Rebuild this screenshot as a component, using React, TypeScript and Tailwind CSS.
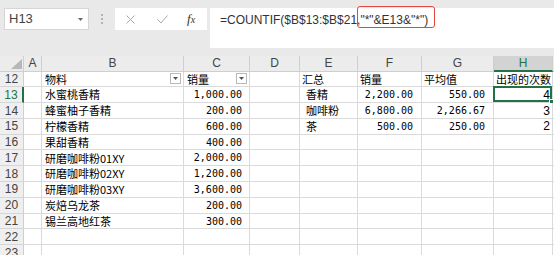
import React from 'react';

type Row = {
  n: number;
  b?: string;
  c?: string;
  e?: string;
  f?: string;
  g?: string;
  h?: string;
};

const rows: Row[] = [
  { n: 12, b: '物料', c: '销量', e: '汇总', f: '销量', g: '平均值', h: '出现的次数' },
  { n: 13, b: '水蜜桃香精', c: '1,000.00', e: '香精', f: '2,200.00', g: '550.00', h: '4' },
  { n: 14, b: '蜂蜜柚子香精', c: '200.00', e: '咖啡粉', f: '6,800.00', g: '2,266.67', h: '3' },
  { n: 15, b: '柠檬香精', c: '600.00', e: '茶', f: '500.00', g: '250.00', h: '2' },
  { n: 16, b: '果甜香精', c: '400.00' },
  { n: 17, b: '研磨咖啡粉01XY', c: '2,000.00' },
  { n: 18, b: '研磨咖啡粉02XY', c: '1,200.00' },
  { n: 19, b: '研磨咖啡粉03XY', c: '3,600.00' },
  { n: 20, b: '炭焙乌龙茶', c: '200.00' },
  { n: 21, b: '锡兰高地红茶', c: '300.00' },
  { n: 22 },
  { n: 23 },
];

const columns = [
  { key: 'A', w: 'w-[18px]' },
  { key: 'B', w: 'w-[142px]' },
  { key: 'C', w: 'w-[66px]' },
  { key: 'D', w: 'w-[50px]' },
  { key: 'E', w: 'w-[58px]' },
  { key: 'F', w: 'w-[64px]' },
  { key: 'G', w: 'w-[72px]' },
  { key: 'H', w: 'w-[59px]' },
];

const cjk = "font-['Noto_Sans_CJK_SC',sans-serif]";
const mono = "font-['DejaVu_Sans_Mono','Noto_Sans_CJK_SC',monospace]";
const ui = "font-['Liberation_Sans',Arial,sans-serif]";
const cell = 'h-full shrink-0 border-r border-b border-[#dadada] flex items-center overflow-hidden whitespace-nowrap';

const FilterButton: React.FC = () => (
  <span className="ml-auto mr-[2px] w-[11px] h-[11px] border border-[#b9b9b9] bg-white flex items-center justify-center">
    <svg width="5" height="3" viewBox="0 0 5 3">
      <polygon points="0,0 5,0 2.5,3" fill="#555" />
    </svg>
  </span>
);

const FormulaBar: React.FC = () => (
  <div className="h-[56px] bg-[#e9e9e9] flex items-start pt-[8px] pl-[4px]">
    {/* Name box */}
    <div className={`w-[85px] h-[22px] bg-white border border-[#d6d6d6] flex items-center pl-[4px] pr-[5px] text-[13px] text-[#444] ${ui}`}>
      H13
      <svg className="ml-auto" width="5" height="3" viewBox="0 0 5 3">
        <polygon points="0,0 5,0 2.5,3" fill="#666" />
      </svg>
    </div>
    {/* Separator dots */}
    <div className="w-[26px] h-[22px] flex flex-col items-center justify-center gap-[2px]">
      <span className="w-[2px] h-[2px] bg-[#b5b5b5]" />
      <span className="w-[2px] h-[2px] bg-[#b5b5b5]" />
      <span className="w-[2px] h-[2px] bg-[#b5b5b5]" />
    </div>
    {/* Cancel / Enter / fx */}
    <div className="w-[92px] h-[22px] bg-white flex items-center">
      <svg className="ml-[11px]" width="9" height="9" viewBox="0 0 9 9">
        <path d="M0.5 0.5 L8.5 8.5 M8.5 0.5 L0.5 8.5" stroke="#a8a8a8" strokeWidth="1" fill="none" />
      </svg>
      <svg className="ml-[22px]" width="11" height="9" viewBox="0 0 11 9">
        <path d="M0.5 4.5 L4 8 L10.5 0.5" stroke="#a8a8a8" strokeWidth="1" fill="none" />
      </svg>
      <span className="ml-[19px] text-[13px] italic text-[#333] font-['Liberation_Serif',serif]">
        f<span className="text-[10px]">x</span>
      </span>
    </div>
    {/* Formula input */}
    <div className={`ml-[3px] flex-1 h-[40px] bg-white pl-[10px] pt-[4px] text-[12px] leading-[16px] text-[#333] whitespace-nowrap ${ui}`}>
      =COUNTIF($B$13:$B$21,
      <span className="relative">
        "*"&amp;E13&amp;"*")
        <span className="absolute -left-[3px] -right-[7px] -top-[7px] -bottom-[1px] border border-[#e5473f] rounded-[3px]" />
      </span>
    </div>
  </div>
);

const ColumnHeader: React.FC = () => (
  <div className={`h-[15.5px] flex bg-[#ececec] text-[12px] text-[#444] ${ui}`}>
    <div className="w-[24px] h-full shrink-0 border-r border-b border-[#cfcfcf] flex items-end justify-end pr-[1px] pb-[2px]">
      <svg width="11" height="10" viewBox="0 0 11 10">
        <polygon points="11,0 11,10 0,10" fill="#b7b7b7" />
      </svg>
    </div>
    {columns.map((col) =>
      col.key === 'H' ? (
        <div
          key={col.key}
          className={`${col.w} h-full shrink-0 bg-[#d3d3d3] border-r border-[#cfcfcf] border-b-2 border-b-[#217346] flex items-center justify-center text-[#217346]`}
        >
          {col.key}
        </div>
      ) : (
        <div
          key={col.key}
          className={`${col.w} h-full shrink-0 border-r border-b border-[#cfcfcf] flex items-center justify-center`}
        >
          {col.key}
        </div>
      )
    )}
    <div className="flex-1 h-full border-b border-[#cfcfcf]" />
  </div>
);

const SheetRow: React.FC<{ row: Row }> = ({ row }) => {
  const isHeader = row.n === 12;
  const isActive = row.n === 13;
  return (
    <div className="h-[15.8px] flex text-black">
      <div
        className={`w-[24px] h-full shrink-0 bg-[#efefef] border-b border-[#d6d6d6] flex items-center justify-center text-[12px] ${ui} ${
          isActive ? 'border-r-2 border-r-[#217346] text-[#217346]' : 'border-r border-r-[#cfcfcf] text-[#444]'
        }`}
      >
        {row.n}
      </div>
      <div className={`w-[18px] ${cell}`} />
      <div className={`w-[142px] ${cell} pl-[3px] text-[11px] ${cjk}`}>
        {row.b}
        {isHeader && <FilterButton />}
      </div>
      <div className={`w-[66px] ${cell} ${isHeader ? `pl-[3px] text-[11px] ${cjk}` : `justify-end pr-[7px] text-[10px] ${mono}`}`}>
        {row.c}
        {isHeader && <FilterButton />}
      </div>
      <div className={`w-[50px] ${cell}`} />
      <div className={`w-[58px] ${cell} text-[11px] ${cjk} ${isHeader ? 'pl-[2px]' : 'pl-[6px]'}`}>{row.e}</div>
      <div className={`w-[64px] ${cell} ${isHeader ? `pl-[2px] text-[11px] ${cjk}` : `justify-end pr-[8px] text-[10px] ${mono}`}`}>
        {row.f}
      </div>
      <div className={`w-[72px] ${cell} ${isHeader ? `pl-[2px] text-[11px] ${cjk}` : `justify-end pr-[8px] text-[10px] ${mono}`}`}>
        {row.g}
      </div>
      <div
        className={`w-[59px] ${cell} relative overflow-visible ${
          isHeader ? `pl-[2px] text-[11px] ${cjk}` : `justify-end pr-[2px] text-[12px] ${ui}`
        }`}
      >
        {row.h}
        {isActive && (
          <>
            <span className="absolute -left-[1px] -top-[1px] right-0 bottom-0 border-2 border-[#217346]" />
            <span className="absolute -right-[2px] -bottom-[2px] w-[5px] h-[5px] bg-[#217346] border border-white" />
          </>
        )}
      </div>
      <div className="flex-1 h-full border-b border-[#dadada]" />
    </div>
  );
};

const App: React.FC = () => {
  return (
    <div className="w-[554px] h-[255px] overflow-hidden bg-white">
      <FormulaBar />
      <ColumnHeader />
      {rows.map((row) => (
        <SheetRow key={row.n} row={row} />
      ))}
    </div>
  );
};

export default App;
